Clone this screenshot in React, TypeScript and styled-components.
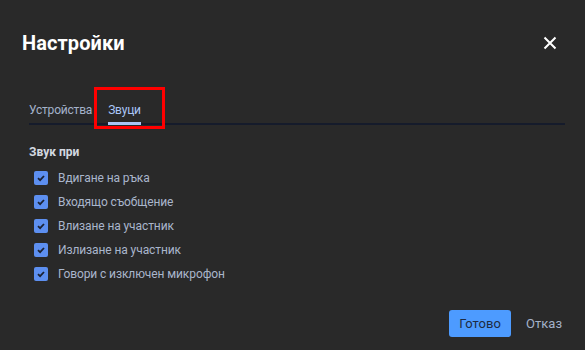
import React, { useState } from 'react';
import styled, { createGlobalStyle } from 'styled-components';

const GlobalStyle = createGlobalStyle`
  html, body {
    margin: 0;
    padding: 0;
    background: #292929;
  }
  body {
    font-family: Roboto, "Noto Sans", sans-serif;
  }
`;

const Dialog = styled.div`
  width: 585px;
  height: 350px;
  box-sizing: border-box;
  background: #292929;
  display: flex;
  flex-direction: column;
  padding: 0 20px 0 22px;
`;

const Header = styled.div`
  display: flex;
  align-items: center;
  justify-content: space-between;
  height: 86px;
`;

const Title = styled.h1`
  margin: 0;
  font-size: 20px;
  font-weight: 700;
  color: #ffffff;
  letter-spacing: 0.1px;
`;

const CloseButton = styled.button`
  border: 0;
  background: transparent;
  padding: 0;
  width: 24px;
  height: 24px;
  display: flex;
  align-items: center;
  justify-content: center;
  cursor: pointer;
  margin-right: 3px;
`;

const TabBar = styled.div`
  display: flex;
  gap: 16px;
  margin-left: 7px;
  border-bottom: 2px solid #151b2b;
  height: 37px;
  align-items: flex-end;
`;

const Tab = styled.div<{ $active?: boolean; $marked?: boolean }>`
  position: relative;
  font-size: 12px;
  letter-spacing: -0.2px;
  color: ${({ $active }) => ($active ? '#a9c6f7' : '#a4b2c9')};
  padding-bottom: 6px;
  cursor: pointer;

  &::after {
    content: '';
    display: ${({ $active }) => ($active ? 'block' : 'none')};
    position: absolute;
    left: 0;
    right: 0;
    bottom: -2px;
    height: 3px;
    background: #a9c6f7;
  }

  &::before {
    content: '';
    display: ${({ $marked }) => ($marked ? 'block' : 'none')};
    position: absolute;
    left: -14px;
    right: -24px;
    top: -16px;
    bottom: -6px;
    border: 3px solid #ff0000;
  }
`;

const Section = styled.div`
  margin-left: 7px;
  padding-top: 20px;
`;

const SectionTitle = styled.div`
  font-size: 12px;
  font-weight: 700;
  color: #d3d8e0;
  margin-bottom: 12px;
`;

const List = styled.div`
  display: flex;
  flex-direction: column;
  gap: 10px;
  padding-left: 5px;
`;

const Row = styled.label`
  display: flex;
  align-items: center;
  gap: 10px;
  font-size: 12px;
  letter-spacing: -0.1px;
  color: #a9b6cc;
  height: 14px;
  cursor: pointer;
`;

const Box = styled.span`
  width: 14px;
  height: 14px;
  border-radius: 2px;
  background: #5d8ff0;
  display: flex;
  align-items: center;
  justify-content: center;
`;

const Footer = styled.div`
  margin-top: auto;
  display: flex;
  justify-content: flex-end;
  align-items: center;
  gap: 15px;
  padding-bottom: 13px;
`;

const PrimaryButton = styled.button`
  border: 0;
  border-radius: 3px;
  background: #4d9bff;
  color: #1d2b42;
  font-family: Roboto, sans-serif;
  font-size: 13px;
  height: 27px;
  width: 62px;
  cursor: pointer;
`;

const TextButton = styled.button`
  border: 0;
  background: transparent;
  color: #a4b2c9;
  font-family: Roboto, sans-serif;
  font-size: 13px;
  padding: 0;
  margin-right: 3px;
  cursor: pointer;
`;

const items = [
  'Вдигане на ръка',
  'Входящо съобщение',
  'Влизане на участник',
  'Излизане на участник',
  'Говори с изключен микрофон'
];

const Check = () => (
  <svg width="10" height="10" viewBox="0 0 10 10">
    <path d="M2 5.2 L4.1 7.2 L8 3" fill="none" stroke="#1b2233" strokeWidth="1.8" />
  </svg>
);

export default function App() {
  const [tab, setTab] = useState('sounds');
  return (
    <>
      <GlobalStyle />
      <Dialog>
        <Header>
          <Title>Настройки</Title>
          <CloseButton title="Затвори">
            <svg width="14" height="14" viewBox="0 0 14 14">
              <path d="M1.5 1.5 L12.5 12.5 M12.5 1.5 L1.5 12.5" stroke="#ffffff" strokeWidth="2" />
            </svg>
          </CloseButton>
        </Header>
        <TabBar>
          <Tab $active={tab === 'devices'} onClick={() => setTab('devices')}>
            Устройства
          </Tab>
          <Tab $active={tab === 'sounds'} $marked onClick={() => setTab('sounds')}>
            Звуци
          </Tab>
        </TabBar>
        <Section>
          <SectionTitle>Звук при</SectionTitle>
          <List>
            {items.map((item) => (
              <Row key={item}>
                <Box>
                  <Check />
                </Box>
                {item}
              </Row>
            ))}
          </List>
        </Section>
        <Footer>
          <PrimaryButton>Готово</PrimaryButton>
          <TextButton>Отказ</TextButton>
        </Footer>
      </Dialog>
    </>
  );
}
